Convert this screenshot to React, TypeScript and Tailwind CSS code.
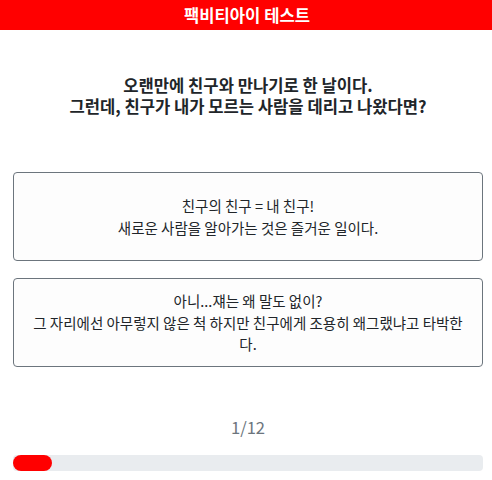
import React from "react";

export default function App() {
  const font = { fontFamily: '"Noto Sans CJK KR", "Noto Sans", sans-serif' };
  return (
    <div className="w-[492px] h-[480px] bg-white text-[#212529]" style={font}>
      <div className="h-[30px] bg-[#ff0000] flex items-center justify-center text-white font-bold text-[16.6px] pl-[2px]">
        팩비티아이 테스트
      </div>
      <div className="pl-[13px] pr-[9px]">
        <div className="mt-[45px] text-center font-bold text-[16.6px] leading-[20.5px]">
          <p>오랜만에 친구와 만나기로 한 날이다.</p>
          <p>그런데, 친구가 내가 모르는 사람을 데리고 나왔다면?</p>
        </div>
        <div className="mt-[56px] flex flex-col gap-[17px]">
          <button className="h-[89px] w-full rounded-[4px] border border-[#6c757d] bg-[#fdfdfd] px-[16px] flex items-center justify-center text-center text-[14.5px] leading-[21.5px] text-[#212529]">
            <span>
              친구의 친구 = 내 친구!
              <br />
              새로운 사람을 알아가는 것은 즐거운 일이다.
            </span>
          </button>
          <button className="h-[89px] w-full rounded-[4px] border border-[#6c757d] bg-[#fdfdfd] px-[16px] flex items-center justify-center text-center text-[14.5px] leading-[21.5px] text-[#212529]">
            <span>
              아니...쟤는 왜 말도 없이?
              <br />
              그 자리에선 아무렇지 않은 척 하지만 친구에게 조용히 왜그랬냐고 타박한다.
            </span>
          </button>
        </div>
        <div className="mt-[48px] text-center text-[16.6px] leading-[24px] text-[#6c757d]">1/12</div>
        <div className="mt-[16px] h-[16px] w-full rounded-[4px] bg-[#e9ecef] overflow-hidden">
          <div className="h-full w-[39px] rounded-full bg-[#ff0000]" />
        </div>
      </div>
    </div>
  );
}
